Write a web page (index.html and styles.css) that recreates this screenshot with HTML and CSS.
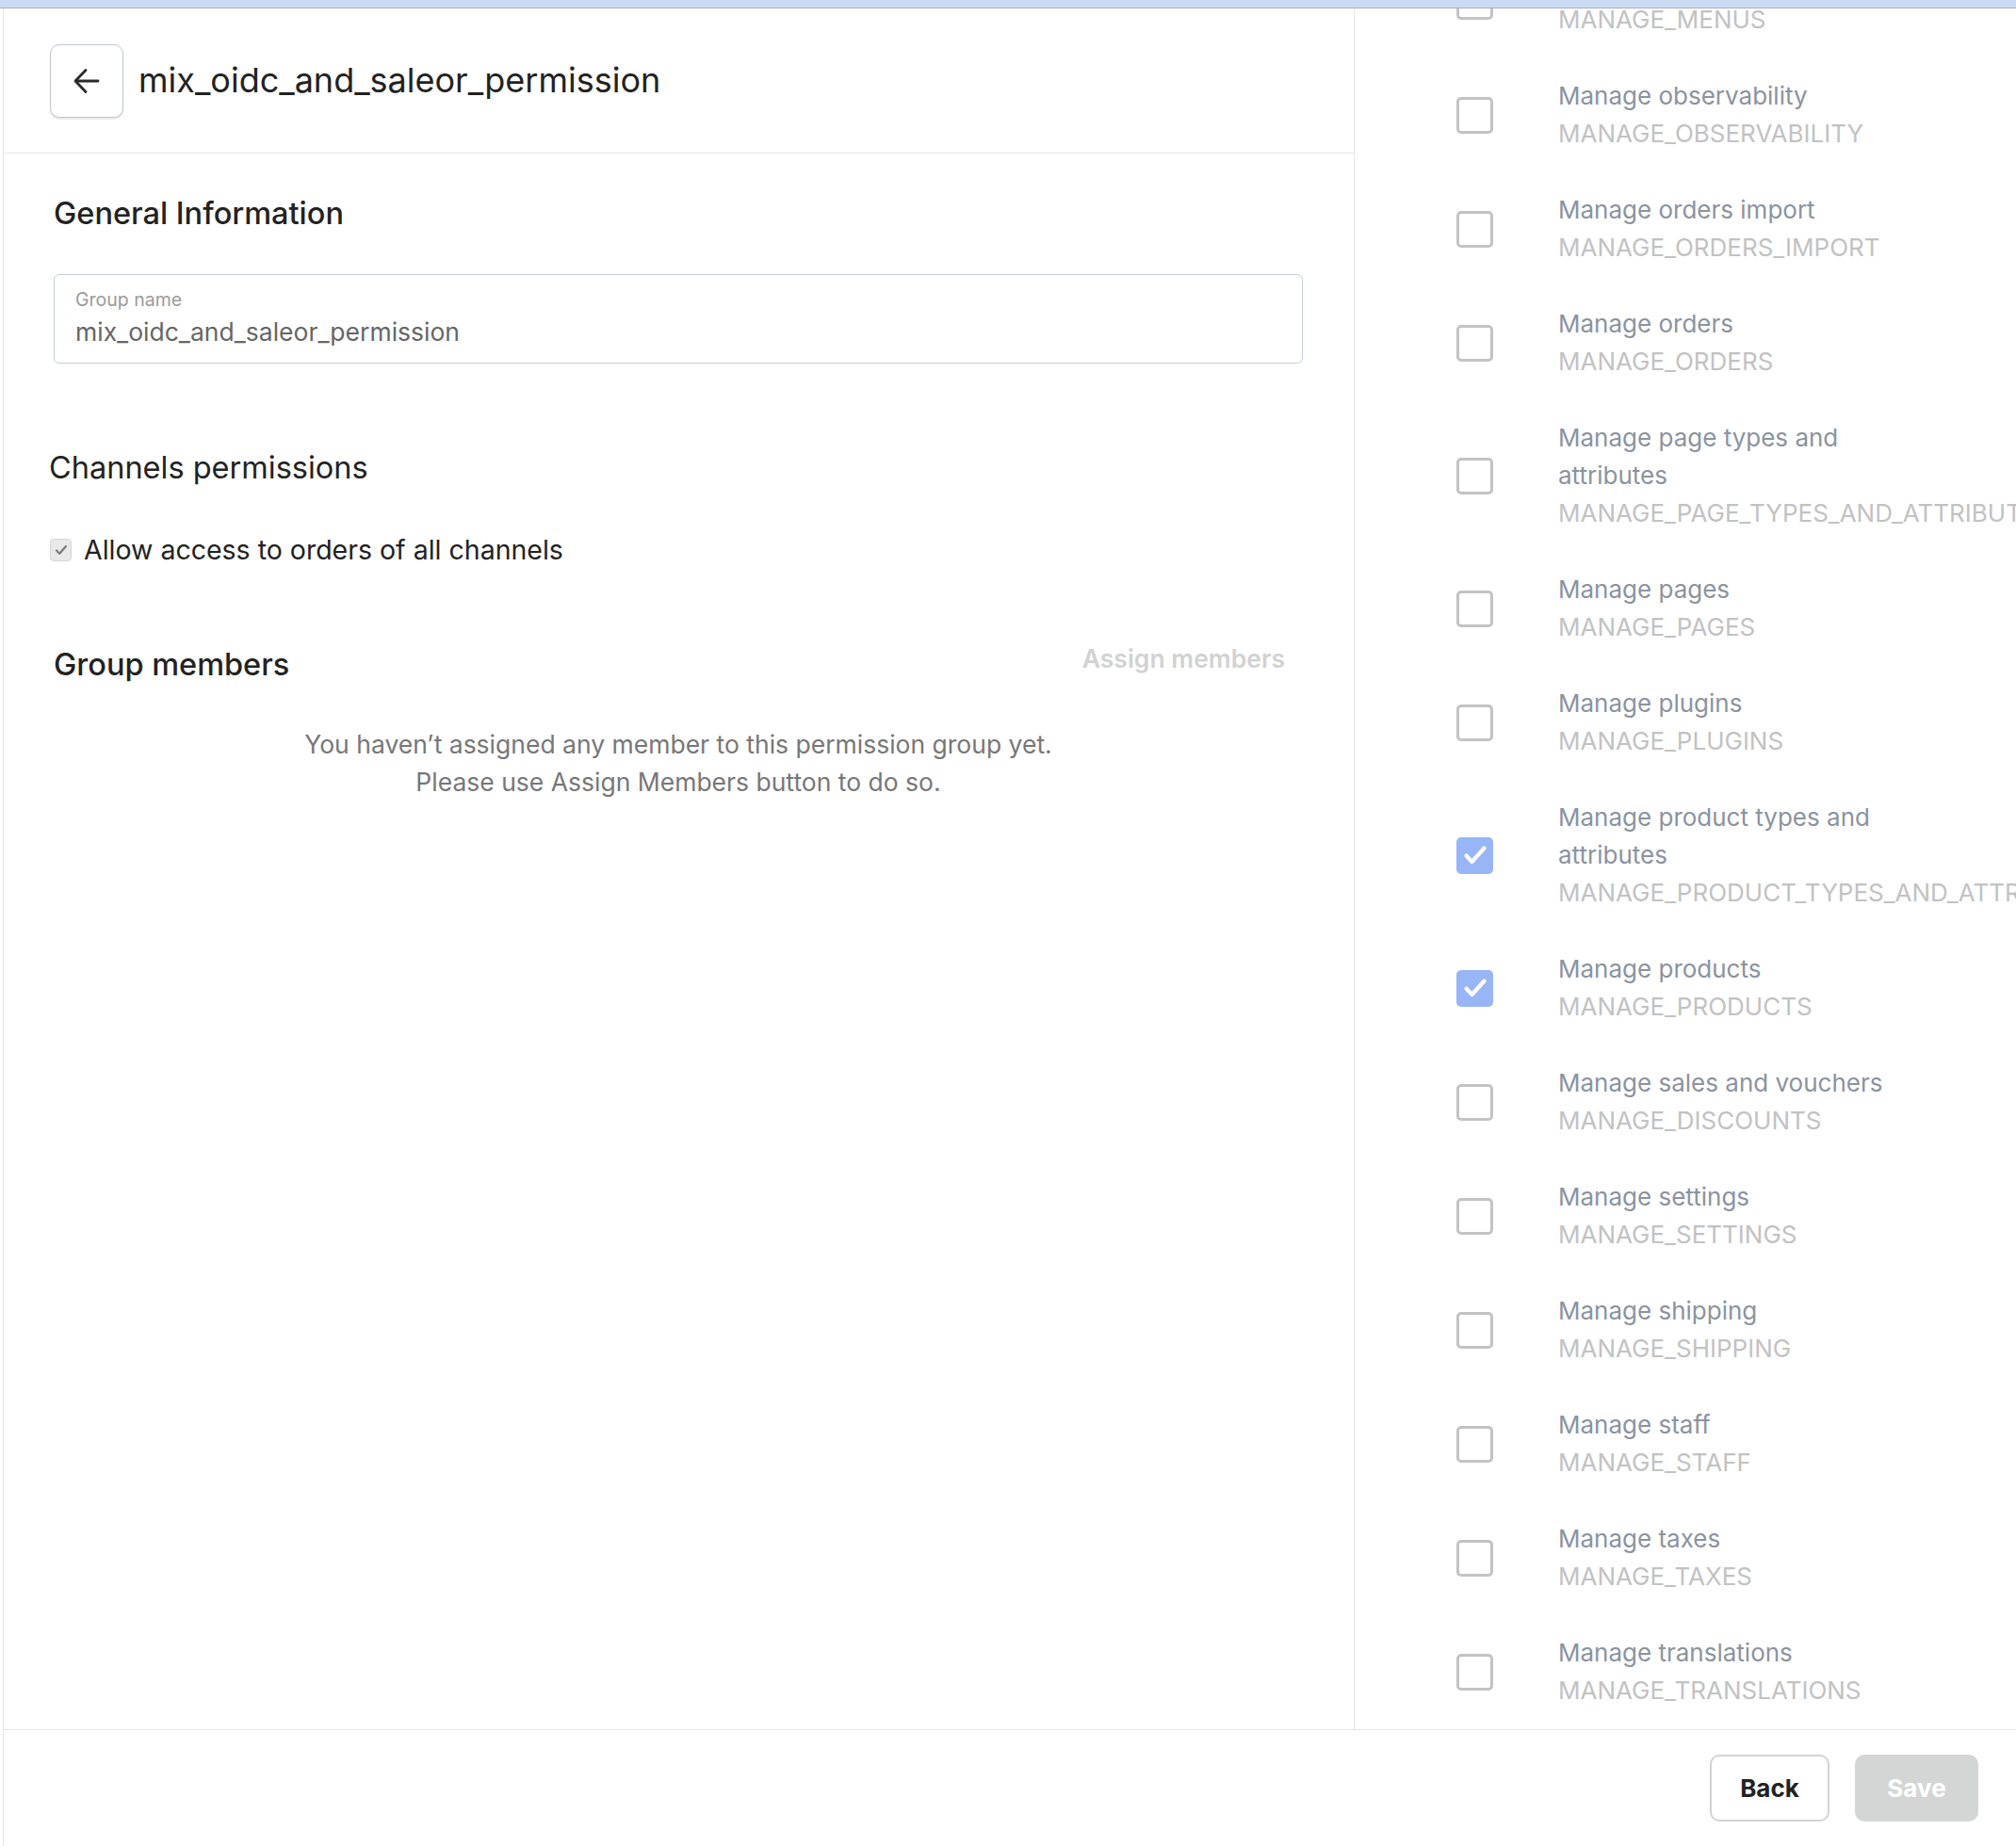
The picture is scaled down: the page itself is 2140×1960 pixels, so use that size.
FILE: index.html
```html
<!DOCTYPE html>
<html lang="en">
<head>
<meta charset="utf-8">
<title>mix_oidc_and_saleor_permission</title>
<link rel="stylesheet" href="styles.css">
</head>
<body>
<div class="topbar"></div>
<div class="app">
  <div class="main">
    <section class="left">
      <header class="header">
        <button class="back-btn" aria-label="Back">
          <svg width="30" height="28" viewBox="0 0 30 28" fill="none" stroke="#2a2a2a" stroke-width="2.8" stroke-linecap="round" stroke-linejoin="round"><path d="M27 14H3.5"/><path d="M14 2.5L3 14l11 11.5"/></svg>
        </button>
        <h1 class="title">mix_oidc_and_saleor_permission</h1>
      </header>

      <div class="section general">
        <h2 class="heading">General Information</h2>
        <div class="field">
          <div class="field-label">Group name</div>
          <div class="field-value">mix_oidc_and_saleor_permission</div>
        </div>
      </div>

      <div class="section channels">
        <h2 class="heading regular">Channels permissions</h2>
        <label class="allow">
          <span class="small-check"><svg width="14" height="12" viewBox="0 0 14 12" fill="none" stroke="#7a7a7a" stroke-width="2.2" stroke-linecap="round" stroke-linejoin="round"><path d="M2 6.5l3.2 3.3L12 2"/></svg></span>
          <span>Allow access to orders of all channels</span>
        </label>
      </div>

      <div class="section members">
        <div class="members-head">
          <h2 class="heading">Group members</h2>
          <span class="assign">Assign members</span>
        </div>
        <p class="empty">You haven’t assigned any member to this permission group yet.<br>Please use Assign Members button to do so.</p>
      </div>
    </section>

    <aside class="right">
      <ul class="perms">
        <li class="perm"><span class="box"></span><div class="ptext"><div class="plabel">Manage apps</div><div class="pcode">MANAGE_APPS</div></div></li>
        <li class="perm"><span class="box"></span><div class="ptext"><div class="plabel">Manage channels</div><div class="pcode">MANAGE_CHANNELS</div></div></li>
        <li class="perm"><span class="box"></span><div class="ptext"><div class="plabel">Manage checkouts</div><div class="pcode">MANAGE_CHECKOUTS</div></div></li>
        <li class="perm"><span class="box"></span><div class="ptext"><div class="plabel">Manage gift cards</div><div class="pcode">MANAGE_GIFT_CARD</div></div></li>
        <li class="perm"><span class="box"></span><div class="ptext"><div class="plabel">Manage navigation</div><div class="pcode">MANAGE_MENUS</div></div></li>
        <li class="perm"><span class="box"></span><div class="ptext"><div class="plabel">Manage observability</div><div class="pcode">MANAGE_OBSERVABILITY</div></div></li>
        <li class="perm"><span class="box"></span><div class="ptext"><div class="plabel">Manage orders import</div><div class="pcode">MANAGE_ORDERS_IMPORT</div></div></li>
        <li class="perm"><span class="box"></span><div class="ptext"><div class="plabel">Manage orders</div><div class="pcode">MANAGE_ORDERS</div></div></li>
        <li class="perm"><span class="box"></span><div class="ptext"><div class="plabel">Manage page types and attributes</div><div class="pcode">MANAGE_PAGE_TYPES_AND_ATTRIBUTES</div></div></li>
        <li class="perm"><span class="box"></span><div class="ptext"><div class="plabel">Manage pages</div><div class="pcode">MANAGE_PAGES</div></div></li>
        <li class="perm"><span class="box"></span><div class="ptext"><div class="plabel">Manage plugins</div><div class="pcode">MANAGE_PLUGINS</div></div></li>
        <li class="perm"><span class="box checked"><svg width="26" height="22" viewBox="0 0 26 22" fill="none" stroke="#fff" stroke-width="4.2" stroke-linecap="round" stroke-linejoin="round"><path d="M3.5 11.5l6 6.5L22.5 3.5"/></svg></span><div class="ptext"><div class="plabel">Manage product types and attributes</div><div class="pcode">MANAGE_PRODUCT_TYPES_AND_ATTRIBUTES</div></div></li>
        <li class="perm"><span class="box checked"><svg width="26" height="22" viewBox="0 0 26 22" fill="none" stroke="#fff" stroke-width="4.2" stroke-linecap="round" stroke-linejoin="round"><path d="M3.5 11.5l6 6.5L22.5 3.5"/></svg></span><div class="ptext"><div class="plabel">Manage products</div><div class="pcode">MANAGE_PRODUCTS</div></div></li>
        <li class="perm"><span class="box"></span><div class="ptext"><div class="plabel">Manage sales and vouchers</div><div class="pcode">MANAGE_DISCOUNTS</div></div></li>
        <li class="perm"><span class="box"></span><div class="ptext"><div class="plabel">Manage settings</div><div class="pcode">MANAGE_SETTINGS</div></div></li>
        <li class="perm"><span class="box"></span><div class="ptext"><div class="plabel">Manage shipping</div><div class="pcode">MANAGE_SHIPPING</div></div></li>
        <li class="perm"><span class="box"></span><div class="ptext"><div class="plabel">Manage staff</div><div class="pcode">MANAGE_STAFF</div></div></li>
        <li class="perm"><span class="box"></span><div class="ptext"><div class="plabel">Manage taxes</div><div class="pcode">MANAGE_TAXES</div></div></li>
        <li class="perm"><span class="box"></span><div class="ptext"><div class="plabel">Manage translations</div><div class="pcode">MANAGE_TRANSLATIONS</div></div></li>
      </ul>
    </aside>
  </div>

  <footer class="footer">
    <button class="btn btn-back">Back</button>
    <button class="btn btn-save" disabled>Save</button>
  </footer>
</div>
</body>
</html>
```

FILE: styles.css
```css
* { box-sizing: border-box; }

html, body {
  margin: 0;
  padding: 0;
  width: 2140px;
  height: 1960px;
  overflow: hidden;
  background: #ffffff;
  font-family: Inter, "Noto Sans", "Liberation Sans", sans-serif;
  color: #252525;
}

.topbar {
  height: 9px;
  background: #cbdaf3;
  border-bottom: 1px solid #a9afbd;
}

.app {
  height: 1951px;
  margin-left: 3px;
  border-left: 1px solid #e5e5e5;
  display: flex;
  flex-direction: column;
}

.main {
  height: 1827px;
  display: flex;
  flex: none;
}

/* ---------- left column ---------- */
.left {
  width: 1434px;
  flex: none;
  border-right: 1px solid #e6e6e6;
}

.header {
  height: 154px;
  border-bottom: 1px solid #e6e6e6;
  display: flex;
  align-items: center;
  padding-left: 49px;
  gap: 16px;
}

.back-btn {
  width: 78px;
  height: 78px;
  flex: none;
  border: 1px solid #bfc6d1;
  border-radius: 10px;
  background: #fff;
  box-shadow: 0 2px 1px rgba(60, 70, 90, 0.12);
  display: flex;
  align-items: center;
  justify-content: center;
  padding: 0;
}

.title {
  margin: 0 0 1px;
  font-size: 36px;
  line-height: 44px;
  font-weight: 400;
  color: #222;
}

.section {
  padding: 0 54px 0 53px;
}

.heading {
  margin: 0;
  font-size: 32.5px;
  line-height: 40px;
  font-weight: 500;
  color: #222;
}

.heading.regular { font-weight: 400; }

.general { padding-top: 44px; }

.field {
  margin-top: 44px;
  height: 95px;
  border: 1px solid #c5cedd;
  border-radius: 6px;
  padding: 14px 22px 0;
}

.field-label {
  font-size: 19.5px;
  line-height: 24px;
  color: #9a9a9a;
}

.field-value {
  margin-top: 6px;
  font-size: 26.5px;
  line-height: 32px;
  color: #666;
}

.channels {
  padding-top: 91px;
  padding-left: 48px;
}

.allow {
  margin-top: 50px;
  display: flex;
  align-items: center;
  gap: 13px;
  font-size: 28.5px;
  line-height: 34px;
  color: #222;
  padding-left: 1px;
}

.small-check {
  width: 23px;
  height: 24px;
  flex: none;
  border-radius: 4px;
  background: #e9e9e9;
  border: 1px solid #d6d6d6;
  display: flex;
  align-items: center;
  justify-content: center;
}

.members { padding-top: 85px; }

.members-head {
  display: flex;
  align-items: flex-start;
  justify-content: space-between;
  padding-right: 19px;
}

.assign {
  font-size: 26.5px;
  line-height: 32px;
  font-weight: 600;
  color: #d2d2d2;
  margin-top: -3px;
}

.empty {
  margin: 44px 0 0;
  text-align: center;
  font-size: 26.5px;
  line-height: 40px;
  color: #777;
}

/* ---------- right column ---------- */
.right {
  flex: 1;
  min-width: 0;
  overflow: hidden;
  display: flex;
  flex-direction: column;
  justify-content: flex-end;
}

.perms {
  list-style: none;
  margin: 0;
  padding: 0;
  flex: none;
}

.perm {
  display: flex;
  align-items: center;
  padding: 20px 0 21px 108px;
}

.box {
  width: 39px;
  height: 39px;
  flex: none;
  border: 3px solid #c3c3c3;
  border-radius: 5px;
  background: #fff;
  display: flex;
  align-items: center;
  justify-content: center;
}

.box.checked {
  border: none;
  background: #97b5f7;
}

.ptext {
  margin-left: 69px;
  width: 400px;
  flex: none;
}

.plabel {
  font-size: 26px;
  line-height: 40px;
  color: #8b93a0;
}

.pcode {
  font-size: 26px;
  line-height: 40px;
  color: #c2c2c2;
  white-space: nowrap;
}

/* ---------- footer ---------- */
.footer {
  flex: 1;
  border-top: 1px solid #e6e6e6;
  display: flex;
  align-items: center;
  justify-content: flex-end;
  gap: 27px;
  padding-right: 40px;
}

.btn {
  height: 71px;
  border-radius: 10px;
  font-family: Inter, "Noto Sans", sans-serif;
  font-size: 26px;
  font-weight: 700;
  padding: 0;
}

.btn-back {
  width: 127px;
  background: #fff;
  border: 2px solid #d3d3d3;
  color: #222;
}

.btn-save {
  width: 131px;
  background: #d4d6d6;
  border: none;
  color: #fff;
}
```
